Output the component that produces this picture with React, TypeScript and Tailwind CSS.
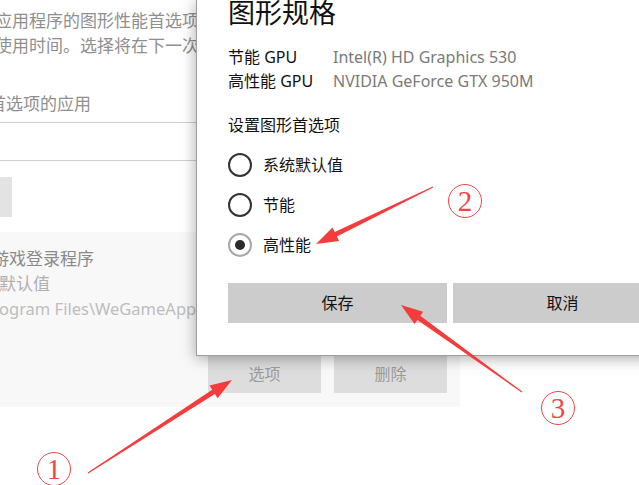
import React from 'react';

const cjk = { fontFamily: '"Noto Sans", "Noto Sans CJK SC", sans-serif' };

type Pt = [number, number];

// tapered arrow: thin tail, thick near the head
const arrowPoints = (tail: Pt, tip: Pt, headLen = 22, headW = 15, shaftW = 5) => {
  const dx = tip[0] - tail[0];
  const dy = tip[1] - tail[1];
  const len = Math.hypot(dx, dy);
  const ux = dx / len;
  const uy = dy / len;
  const nx = -uy;
  const ny = ux;
  const bx = tip[0] - ux * headLen;
  const by = tip[1] - uy * headLen;
  const p = (x: number, y: number) => `${x.toFixed(1)},${y.toFixed(1)}`;
  return [
    p(tail[0] + nx * 0.5, tail[1] + ny * 0.5),
    p(bx + nx * (shaftW / 2), by + ny * (shaftW / 2)),
    p(bx + nx * (headW / 2), by + ny * (headW / 2)),
    p(tip[0], tip[1]),
    p(bx - nx * (headW / 2), by - ny * (headW / 2)),
    p(bx - nx * (shaftW / 2), by - ny * (shaftW / 2)),
    p(tail[0] - nx * 0.5, tail[1] - ny * 0.5),
  ].join(' ');
};

const arrows: { tail: Pt; tip: Pt }[] = [
  { tail: [88, 473], tip: [232, 380] },
  { tail: [433, 187], tip: [316, 244] },
  { tail: [522, 392], tip: [401, 305] },
];

const marks = [
  { n: '1', cls: 'left-[37px] top-[452px]' },
  { n: '2', cls: 'left-[448px] top-[184px]' },
  { n: '3', cls: 'left-[541px] top-[391px]' },
];

const Radio = ({ label, checked }: { label: string; checked?: boolean }) => (
  <div className="flex h-[40px] items-center gap-[11px]">
    <div
      className={
        checked
          ? 'flex h-[24px] w-[24px] items-center justify-center rounded-full border-[2px] border-[#a8a8a8]'
          : 'h-[24px] w-[24px] rounded-full border-[2px] border-[#333333]'
      }
    >
      {checked && <div className="h-[10px] w-[10px] rounded-full bg-[#2b2b2b]" />}
    </div>
    <span className="text-[16px] text-[#111]">{label}</span>
  </div>
);

export default function App() {
  return (
    <div className="relative h-[485px] w-[639px] overflow-hidden bg-white" style={cjk}>
      {/* page behind the dialog */}
      <div className="flex flex-col pt-[8px] text-[17px] leading-[25px]">
        <div className="ml-[-5px] whitespace-nowrap text-[#8f8f8f]">应用程序的图形性能首选项可能会改善应用性能或节省电池</div>
        <div className="ml-[-5px] whitespace-nowrap text-[#8f8f8f]">使用时间。选择将在下一次启动应用时生效。</div>
        <div className="ml-[-11px] mt-[33px] whitespace-nowrap text-[#8f8f8f]">首选项的应用</div>
        <div className="mt-[6px] h-[39px] w-[200px] border-y border-[#cfcfcf]" />
        <div className="mt-[16px] h-[40px] w-[12px] bg-[#e3e3e3]" />
        <div className="mt-[15px] flex h-[175px] w-[460px] flex-col bg-[#f8f8f8] pt-[14px]">
          <div className="ml-[-8px] whitespace-nowrap text-[#8a8a8a]">游戏登录程序</div>
          <div className="ml-[-1px] whitespace-nowrap text-[#b0b0b0]">默认值</div>
          <div className="ml-[-1px] whitespace-nowrap text-[16.5px] text-[#bdbdbd]">ogram Files\WeGameApps\tgp_daemon.exe</div>
          <div className="ml-[208px] mt-[34px] flex gap-[13px] text-[16px]">
            <div className="flex h-[38px] w-[113px] items-center justify-center bg-[#dddddd] text-[#9a9a9a]">选项</div>
            <div className="flex h-[38px] w-[113px] items-center justify-center bg-[#dddddd] text-[#9a9a9a]">删除</div>
          </div>
        </div>
      </div>

      {/* dialog */}
      <div className="absolute left-[196px] top-0 flex h-[356px] w-[480px] flex-col border-l border-b border-[#9e9e9e] bg-white pl-[31px] shadow-[0_2px_14px_rgba(0,0,0,0.35)]">
        <div className="mt-[-3px] text-[27px] leading-[32px] text-[#111]">图形规格</div>
        <div className="mt-[16px] grid grid-cols-[105px_1fr] text-[16px] leading-[24px]">
          <span className="text-[#111]">节能 GPU</span>
          <span className="text-[#7a7a7a]">Intel(R) HD Graphics 530</span>
          <span className="text-[#111]">高性能 GPU</span>
          <span className="text-[#7a7a7a]">NVIDIA GeForce GTX 950M</span>
        </div>
        <div className="mt-[20px] text-[16px] leading-[24px] text-[#111]">设置图形首选项</div>
        <div className="mt-[8px] flex flex-col">
          <Radio label="系统默认值" />
          <Radio label="节能" />
          <Radio label="高性能" checked />
        </div>
        <div className="mt-[18px] flex gap-[6px]">
          <div className="flex h-[40px] w-[219px] items-center justify-center bg-[#cccccc] text-[16px] text-[#111]">保存</div>
          <div className="flex h-[40px] w-[219px] items-center justify-center bg-[#cccccc] text-[16px] text-[#111]">取消</div>
        </div>
      </div>

      {/* annotations */}
      <svg className="absolute inset-0" width="639" height="485" viewBox="0 0 639 485">
        {arrows.map((a, i) => (
          <polygon key={i} points={arrowPoints(a.tail, a.tip)} fill="#f43c3c" />
        ))}
      </svg>
      {marks.map((m) => (
        <div
          key={m.n}
          className={`absolute ${m.cls} flex h-[34px] w-[34px] items-center justify-center rounded-full border-[1.5px] border-[#f24545] text-[29px] leading-none text-[#f24545]`}
          style={{ fontFamily: '"Liberation Serif", serif' }}
        >
          {m.n}
        </div>
      ))}
    </div>
  );
}
